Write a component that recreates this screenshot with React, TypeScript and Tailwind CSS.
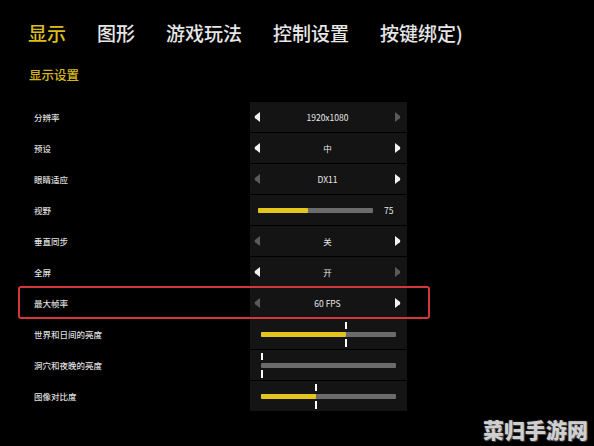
import React from "react";

const FONT = { fontFamily: '"Noto Sans CJK SC", "Noto Sans", sans-serif' };

type Row =
  | { label: string; kind: "select"; value: string; left: boolean; right: boolean; highlight?: boolean }
  | { label: string; kind: "slider"; start: number; width: number; fill: number; value?: string; handle?: boolean };

const rows: Row[] = [
  { label: "分辨率", kind: "select", value: "1920x1080", left: true, right: false },
  { label: "预设", kind: "select", value: "中", left: true, right: true },
  { label: "眼睛适应", kind: "select", value: "DX11", left: false, right: true },
  { label: "视野", kind: "slider", start: 8, width: 115, fill: 50, value: "75" },
  { label: "垂直同步", kind: "select", value: "关", left: false, right: true },
  { label: "全屏", kind: "select", value: "开", left: true, right: false },
  { label: "最大帧率", kind: "select", value: "60 FPS", left: false, right: true, highlight: true },
  { label: "世界和日间的亮度", kind: "slider", start: 11, width: 135, fill: 85, handle: true },
  { label: "洞穴和夜晚的亮度", kind: "slider", start: 11, width: 135, fill: 0, handle: true },
  { label: "图像对比度", kind: "slider", start: 11, width: 135, fill: 55, handle: true },
];

function Arrow({ dir, on }: { dir: "l" | "r"; on: boolean }) {
  const c = on ? "#f2f2f2" : "#5a5a5a";
  return (
    <svg width="6" height="10" viewBox="0 0 6 10">
      {dir === "l" ? (
        <path d="M6 0 L6 10 L1.2 6.2 Q0 5 1.2 3.8 Z" fill={c} />
      ) : (
        <path d="M0 0 L0 10 L4.8 6.2 Q6 5 4.8 3.8 Z" fill={c} />
      )}
    </svg>
  );
}

function Slider({ width, fill, handle }: { width: number; fill: number; handle?: boolean }) {
  const h = handle ? Math.max(fill, 1) : 0;
  return (
    <div className="relative h-[5px]" style={{ width }}>
      <div className="absolute inset-0 rounded-[1px] bg-[#6b6b6b]" />
      <div className="absolute left-0 top-0 h-full rounded-[1px] bg-[#e3c51c]" style={{ width: fill }} />
      {handle && (
        <>
          <div className="absolute top-[-10px] h-[7px] w-[2px] bg-white" style={{ left: h - 1 }} />
          <div className="absolute top-[7px] h-[8px] w-[2px] bg-white" style={{ left: h - 1 }} />
        </>
      )}
    </div>
  );
}

export default function App() {
  const tabs = ["显示", "图形", "游戏玩法", "控制设置", "按键绑定)"];
  return (
    <div className="relative h-[446px] w-[594px] overflow-hidden bg-black" style={FONT}>
      <div className="flex h-[64px] items-center gap-[31px] pl-[28px] text-[19px] font-medium leading-none">
        {tabs.map((t, i) => (
          <span key={t} className={i === 0 ? "text-[#dcbd1c]" : "text-[#e6e6e6]"}>
            {t}
          </span>
        ))}
      </div>
      <div className="flex h-[22px] items-center pl-[29px] text-[12.5px] font-medium leading-none text-[#d4b61c]">
        显示设置
      </div>
      <div className="mt-[16px] flex flex-col gap-[1px]">
        {rows.map((r) => (
          <div key={r.label} className="relative flex h-[30px] items-stretch pl-[34px]">
            <div className="flex w-[216px] items-center text-[8.5px] font-medium leading-none text-[#dedede]">{r.label}</div>
            <div className="flex w-[157px] items-center bg-[#141414]">
              {r.kind === "select" ? (
                <div className="flex w-full items-center pl-[4px] pr-[6px]">
                  <Arrow dir="l" on={r.left} />
                  <div className="flex-1 text-center text-[8.5px] leading-none text-[#e8e8e8]">{r.value}</div>
                  <Arrow dir="r" on={r.right} />
                </div>
              ) : (
                <div className="flex w-full items-center" style={{ paddingLeft: r.start }}>
                  <Slider width={r.width} fill={r.fill} handle={r.handle} />
                  {r.value && (
                    <span className="ml-[11px] text-[8.5px] leading-none text-[#e8e8e8]">{r.value}</span>
                  )}
                </div>
              )}
            </div>
            {r.kind === "select" && r.highlight && (
              <div className="pointer-events-none absolute left-[18px] top-[-2px] h-[33px] w-[412px] rounded-[3px] border-2 border-[#d3363b]" />
            )}
          </div>
        ))}
      </div>
      <div
        className="absolute bottom-[6px] right-[6px] text-[21px] font-black leading-none text-[#cfcfcf]"
        style={{ textShadow: "0 0 2px #555, 1px 1px 0 #444" }}
      >
        菜归手游网
      </div>
    </div>
  );
}
